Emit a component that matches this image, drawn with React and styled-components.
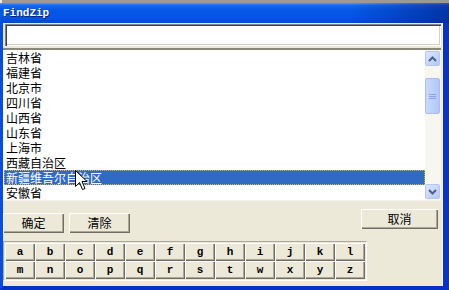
import React from 'react'
import styled, { createGlobalStyle } from 'styled-components'

const GlobalStyle = createGlobalStyle`
  html, body { margin: 0; padding: 0; background: #ece9d8; }
  body { font-family: "Noto Sans CJK SC", "Liberation Sans", sans-serif; }
`

const Screen = styled.div`
  width: 449px;
  height: 290px;
  display: flex;
  flex-direction: column;
  overflow: hidden;
`

const TopStrip = styled.div`
  height: 3px;
  background: linear-gradient(to right, #e8e8e8 0 2px, #9a9a9a 2px);
`

const TitleBar = styled.div`
  height: 20px;
  display: flex;
  align-items: center;
  padding-left: 3px;
  background:
    linear-gradient(to right, rgba(0, 10, 90, 0) 78%, rgba(0, 10, 90, 0.45) 100%),
    linear-gradient(to bottom, #4a9bff 0%, #1468f0 12%, #0558e8 35%, #0355e4 75%, #0349d4 100%);
`

const Title = styled.span`
  font-family: "Liberation Mono", "DejaVu Sans Mono", monospace;
  font-weight: bold;
  font-size: 11px;
  color: #ffffff;
  text-shadow: 1px 1px 0 #0a1f7a;
`

const Body = styled.div`
  flex: 1;
  display: flex;
  flex-direction: column;
  background: #ece9d8;
  border-left: 3px solid #0a4ed8;
  border-right: 6px solid #0733c8;
  border-bottom: 4px solid #0731c4;
  box-shadow: inset -1px 0 0 #f6f4ea;
`

const SearchInput = styled.input`
  margin: 1px 2px 0 2px;
  height: 22px;
  box-sizing: border-box;
  border: none;
  outline: none;
  background: #ffffff;
  box-shadow:
    inset 1px 1px 0 #848284,
    inset 2px 2px 0 #404040,
    inset -1px -1px 0 #ffffff,
    inset -2px -2px 0 #d4d0c8;
  font-size: 12px;
  padding: 0 4px;
`

const ListBox = styled.div`
  position: relative;
  margin: 2px 2px 0 0;
  height: 153px;
  box-sizing: border-box;
  display: flex;
  background: #ffffff;
  border-top: 2px solid #8a8878;
  border-bottom: 1px solid #f4f3ee;
  overflow: hidden;
`

const Items = styled.div`
  flex: 1;
  display: flex;
  flex-direction: column;
  padding-left: 1px;
`

const Item = styled.div`
  height: 15px;
  line-height: 15px;
  overflow: hidden;
  padding-left: 2px;
  font-size: 12px;
  color: ${({ $selected }) => ($selected ? '#ffffff' : '#000000')};
  background: ${({ $selected }) => ($selected ? '#316ac5' : 'transparent')};
  outline: ${({ $selected }) => ($selected ? '1px dotted #c9b86a' : 'none')};
  outline-offset: -1px;
  white-space: nowrap;
`

const ScrollBar = styled.div`
  width: 16px;
  display: flex;
  flex-direction: column;
  background: #f7f6f0;
  padding: 1px 0;
  box-sizing: border-box;
`

const ScrollButton = styled.div`
  width: 15px;
  height: 15px;
  box-sizing: border-box;
  border: 1px solid #b3c6f4;
  border-radius: 2px;
  background: linear-gradient(135deg, #dde7fe 0%, #c3d4fc 60%, #b4c8f6 100%);
  display: flex;
  align-items: center;
  justify-content: center;
`

const Track = styled.div`
  flex: 1;
  display: flex;
  flex-direction: column;
  padding-top: 12px;
`

const Thumb = styled.div`
  width: 15px;
  height: 36px;
  box-sizing: border-box;
  border: 1px solid #a9bdf0;
  border-radius: 2px;
  background: linear-gradient(to right, #c8d8fd 0%, #bccffb 60%, #b2c6f6 100%);
  display: flex;
  align-items: center;
  justify-content: center;
`

const Cursor = styled.svg`
  position: absolute;
  left: 72px;
  top: 120px;
`

const ButtonRow = styled.div`
  margin-top: 8px;
  display: flex;
  justify-content: space-between;
  align-items: flex-start;
  padding-right: 5px;
`

const LeftGroup = styled.div`
  margin-top: 4px;
  display: flex;
  gap: 5px;
`

const PushButton = styled.button`
  width: ${({ $w }) => $w}px;
  height: 20px;
  padding: 0;
  border: none;
  background: #ece9d8;
  box-shadow:
    inset 1px 1px 0 #ffffff,
    inset -1px -1px 0 #716f64,
    inset -2px -2px 0 #aca899;
  font-family: "Noto Sans CJK SC", sans-serif;
  font-size: 12px;
  color: #000000;
  line-height: 20px;
`

const GridFrame = styled.div`
  margin-top: 8px;
  width: 364px;
  box-sizing: border-box;
  padding: 1px;
  border-top: 1px solid #aca899;
  border-left: 1px solid #aca899;
  border-bottom: 1px solid #ffffff;
  border-right: 1px solid #ffffff;
`

const LetterGrid = styled.div`
  display: grid;
  grid-template-columns: repeat(12, 30px);
  grid-auto-rows: 18px;
`

const LetterKey = styled.button`
  padding: 0;
  border: none;
  background: #ece9d8;
  box-shadow:
    inset 1px 1px 0 #ffffff,
    inset -1px -1px 0 #716f64,
    inset -2px -2px 0 #aca899;
  font-family: "Liberation Mono", "DejaVu Sans Mono", monospace;
  font-weight: bold;
  font-size: 11px;
  color: #000000;
`

const provinces = [
  '吉林省',
  '福建省',
  '北京市',
  '四川省',
  '山西省',
  '山东省',
  '上海市',
  '西藏自治区',
  '新疆维吾尔自治区',
  '安徽省',
]

const letters = 'abcdefghijklmnopqrstwxyz'.split('')

export default function App() {
  return (
    <Screen>
      <GlobalStyle />
      <TopStrip />
      <TitleBar>
        <Title>FindZip</Title>
      </TitleBar>
      <Body>
        <SearchInput defaultValue="" />
        <ListBox>
          <Items>
            {provinces.map((p, i) => (
              <Item key={p} $selected={i === 8}>{p}</Item>
            ))}
          </Items>
          <ScrollBar>
            <ScrollButton>
              <svg width="9" height="6" viewBox="0 0 9 6">
                <path d="M1 5 L4.5 1.5 L8 5" fill="none" stroke="#4d6185" strokeWidth="2" />
              </svg>
            </ScrollButton>
            <Track>
              <Thumb>
                <svg width="7" height="7" viewBox="0 0 7 7">
                  <path d="M0 1.5h7M0 3.5h7M0 5.5h7" stroke="#8aa3e3" strokeWidth="1" />
                </svg>
              </Thumb>
            </Track>
            <ScrollButton>
              <svg width="9" height="6" viewBox="0 0 9 6">
                <path d="M1 1 L4.5 4.5 L8 1" fill="none" stroke="#4d6185" strokeWidth="2" />
              </svg>
            </ScrollButton>
          </ScrollBar>
          <Cursor width="13" height="21" viewBox="0 0 13 21">
            <path
              d="M0.5 0.5 L0.5 16.5 L4.5 12.5 L7.5 19.5 L10 18.5 L7 11.5 L12 11.5 Z"
              fill="#ffffff"
              stroke="#000000"
              strokeWidth="1"
            />
          </Cursor>
        </ListBox>
        <ButtonRow>
          <LeftGroup>
            <PushButton $w={61}>确定</PushButton>
            <PushButton $w={61}>清除</PushButton>
          </LeftGroup>
          <PushButton $w={77}>取消</PushButton>
        </ButtonRow>
        <GridFrame>
          <LetterGrid>
            {letters.map((l) => (
              <LetterKey key={l}>{l}</LetterKey>
            ))}
          </LetterGrid>
        </GridFrame>
      </Body>
    </Screen>
  )
}
